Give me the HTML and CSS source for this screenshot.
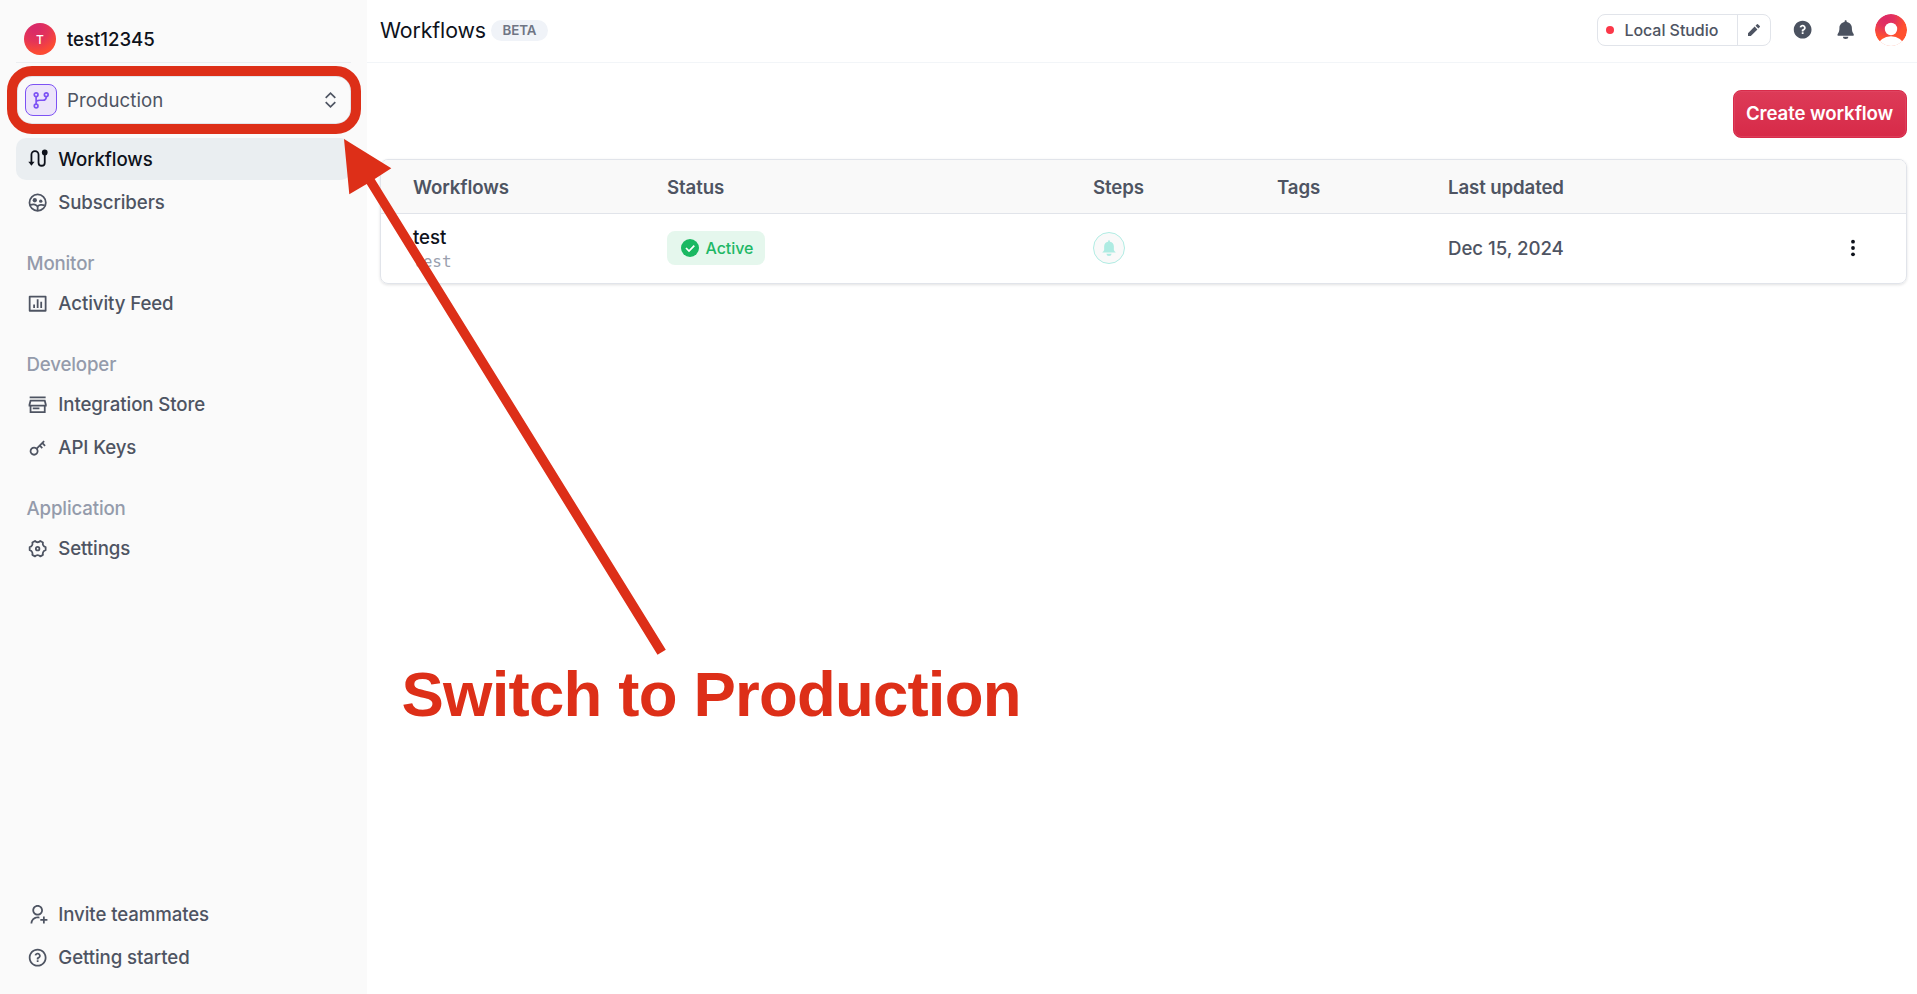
FILE: index.html
```html
<!DOCTYPE html>
<html lang="en">
<head>
<meta charset="utf-8">
<title>Workflows</title>
<link rel="stylesheet" href="styles.css">
</head>
<body>
<div class="app">
  <aside class="sidebar">
    <div class="org"><span class="org-avatar">T</span><span class="org-name">test12345</span></div>
    <div class="env">
      <span class="env-icon"><svg viewBox="0 0 24 24" fill="none" stroke="currentColor" stroke-width="2.2"><circle cx="5.500" cy="5" r="2.500"/><circle cx="5.500" cy="20" r="2.500"/><circle cx="19" cy="5" r="2.500"/><path d="M5.500 7.500v10M19 7.500c0 3.500-1.500 4.800-4.500 4.800H10c-2.800 0-4.500.7-4.500 3"/></svg></span>
      <span class="env-name">Production</span>
      <svg class="env-caret" viewBox="0 0 24 24" fill="none" stroke="currentColor" stroke-width="2.2"><path d="M5.6 9.2 12 2.8l6.400 6.400M5.600 14.800 12 21.200l6.400-6.400"/></svg>
    </div>
    <nav class="nav">
      <a class="item active"><svg viewBox="0 0 24 24" fill="none" stroke="currentColor" stroke-width="2"><path d="M5 17V7.500a4 4 0 0 1 8 0v9a3.500 3.500 0 0 0 7 0V6"/><path d="M1.500 15.500h7L5 20z" fill="currentColor" stroke="none"/><circle cx="20" cy="5" r="3.200" fill="currentColor" stroke="none"/></svg>Workflows</a>
      <a class="item"><svg viewBox="0 0 24 24" fill="none" stroke="currentColor" stroke-width="2"><circle cx="12" cy="12" r="9.200"/><circle cx="8.800" cy="9.300" r="2.400" fill="currentColor" stroke="none"/><circle cx="15.500" cy="10.300" r="1.900" fill="currentColor" stroke="none"/><path d="M3.500 14.800c3.500-1.600 8-1 8.500 2.200v4M12.300 16c1.200-1.700 5-2 7.700-.8"/></svg>Subscribers</a>
      <h2 class="label">Monitor</h2>
      <a class="item"><svg viewBox="0 0 24 24" fill="currentColor"><path d="M3 3H21C21.5523 3 22 3.44772 22 4V20C22 20.5523 21.5523 21 21 21H3C2.44772 21 2 20.5523 2 20V4C2 3.44772 2.44772 3 3 3ZM4 5V19H20V5H4ZM7 13H9V17H7V13ZM11 7H13V17H11V7ZM15 10H17V17H15V10Z"/></svg>Activity Feed</a>
      <h2 class="label">Developer</h2>
      <a class="item"><svg viewBox="0 0 24 24" fill="none" stroke="currentColor" stroke-width="2"><path d="M3 3.700h18M4 7.500h16l1.200 4.500v1H2.800v-1zM4 13v7.500h16V13M6.500 16.200h7.500"/></svg>Integration Store</a>
      <a class="item"><svg viewBox="0 0 24 24" fill="currentColor"><path d="M10.7577 11.8281L18.6066 3.97919L20.0208 5.3934L18.6066 6.80761L21.0815 9.28249L19.6673 10.6967L17.1924 8.22183L15.7782 9.63604L17.8995 11.7574L16.4853 13.1716L14.364 11.0503L12.1719 13.2423C13.4581 15.1837 13.246 17.8251 11.5355 19.5355C9.58291 21.4882 6.41709 21.4882 4.46447 19.5355C2.51184 17.5829 2.51184 14.4171 4.46447 12.4645C6.17493 10.754 8.81633 10.5419 10.7577 11.8281ZM10.1213 18.1213C11.2929 16.9497 11.2929 15.0503 10.1213 13.8787C8.94975 12.7071 7.05025 12.7071 5.87868 13.8787C4.70711 15.0503 4.70711 16.9497 5.87868 18.1213C7.05025 19.2929 8.94975 19.2929 10.1213 18.1213Z"/></svg>API Keys</a>
      <h2 class="label">Application</h2>
      <a class="item"><svg viewBox="0 0 24 24" fill="none" stroke="currentColor" stroke-width="2" stroke-linejoin="round"><path d="M9 3.300C9.800 4.300 10.800 4.800 12 4.800s2.200-.5 3-1.500l3 1.700c-.4 1.200-.3 2.300.3 3.300.6 1.100 1.500 1.700 2.700 1.900v3.600c-1.200.2-2.100.8-2.700 1.900-.6 1-.7 2.100-.3 3.300l-3 1.700c-.8-1-1.800-1.500-3-1.500s-2.200.5-3 1.500L6 19c.4-1.200.3-2.300-.3-3.300-.6-1.100-1.500-1.700-2.700-1.900v-3.600c1.200-.2 2.100-.8 2.700-1.900.6-1 .7-2.100.3-3.300z"/><circle cx="12" cy="12" r="2"/></svg>Settings</a>
    </nav>
    <nav class="nav foot">
      <a class="item"><svg viewBox="0 0 24 24" fill="currentColor"><path d="M14 14.252V16.3414C13.3744 16.1203 12.7013 16 12 16C8.68629 16 6 18.6863 6 22H4C4 17.5817 7.58172 14 12 14C12.6906 14 13.3608 14.0875 14 14.252ZM12 13C8.685 13 6 10.315 6 7C6 3.685 8.685 1 12 1C15.315 1 18 3.685 18 7C18 10.315 15.315 13 12 13ZM12 11C14.21 11 16 9.21 16 7C16 4.79 14.21 3 12 3C9.79 3 8 4.79 8 7C8 9.21 9.79 11 12 11ZM18 17V14H20V17H23V19H20V22H18V19H15V17H18Z"/></svg>Invite teammates</a>
      <a class="item"><svg viewBox="0 0 24 24" fill="currentColor"><path d="M12 22C6.47715 22 2 17.5228 2 12C2 6.47715 6.47715 2 12 2C17.5228 2 22 6.47715 22 12C22 17.5228 17.5228 22 12 22ZM12 20C16.4183 20 20 16.4183 20 12C20 7.58172 16.4183 4 12 4C7.58172 4 4 7.58172 4 12C4 16.4183 7.58172 20 12 20ZM11 15H13V17H11V15ZM13 13.3551V14H11V12.5C11 11.9477 11.4477 11.5 12 11.5C12.8284 11.5 13.5 10.8284 13.5 10C13.5 9.17157 12.8284 8.5 12 8.5C11.2723 8.5 10.6656 9.01823 10.5288 9.70577L8.56731 9.31346C8.88637 7.70919 10.302 6.5 12 6.5C13.933 6.5 15.5 8.067 15.5 10C15.5 11.5855 14.4457 12.9248 13 13.3551Z"/></svg>Getting started</a>
    </nav>
  </aside>
  <main class="main">
    <header class="topbar">
      <h1 class="title">Workflows</h1><span class="beta">BETA</span>
      <div class="studio"><span class="studio-name"><i class="dot"></i>Local Studio</span><span class="studio-edit"><svg viewBox="0 0 24 24" fill="currentColor"><path d="M12.900 6.858l4.242 4.243L7.242 21H3v-4.243l9.900-9.900zm1.414-1.414l2.121-2.122a1 1 0 0 1 1.414 0l2.829 2.829a1 1 0 0 1 0 1.414l-2.122 2.121-4.242-4.242z"/></svg></span></div>
      <svg class="top-icon help" viewBox="0 0 24 24" fill="currentColor"><path d="M12 22C6.47715 22 2 17.5228 2 12C2 6.47715 6.47715 2 12 2C17.5228 2 22 6.47715 22 12C22 17.5228 17.5228 22 12 22ZM11 15V17H13V15H11ZM13 13.3551C14.4457 12.9248 15.5 11.5855 15.5 10C15.5 8.067 13.933 6.5 12 6.5C10.302 6.5 8.88637 7.70919 8.56731 9.31346L10.5288 9.70577C10.6656 9.01823 11.2723 8.5 12 8.5C12.8284 8.5 13.5 9.17157 13.5 10C13.5 10.8284 12.8284 11.5 12 11.5C11.4477 11.5 11 11.9477 11 12.5V14H13V13.3551Z"/></svg>
      <svg class="top-icon bell" viewBox="0 0 24 24" fill="currentColor"><path d="M12 1.500c.7 0 1.200.5 1.200 1.200v.6c3.400.6 5.800 3.300 5.800 6.700 0 3 .5 5 1.800 6.600.8 1 .4 2.400-.8 2.400H4c-1.200 0-1.600-1.400-.8-2.400C4.500 15 5 13 5 10c0-3.400 2.400-6.100 5.800-6.700v-.6c0-.7.5-1.200 1.200-1.200zM9 20h6a3 2.500 0 0 1-6 0z"/></svg>
      <svg class="user" viewBox="0 0 32 32"><defs><radialGradient id="ug" cx=".35" cy=".15" r=".8"><stop offset="0" stop-color="#dd2a66"/><stop offset=".3" stop-color="#e23160"/><stop offset=".75" stop-color="#ff512f"/></radialGradient><clipPath id="uc"><circle cx="16" cy="16" r="16"/></clipPath></defs><g clip-path="url(#uc)"><circle cx="16" cy="16" r="16" fill="url(#ug)"/><circle cx="16" cy="15" r="6.200" fill="#fff"/><ellipse cx="16" cy="31.500" rx="12.500" ry="9.200" fill="#fff"/></g></svg>
    </header>
    <section class="content">
      <button class="create">Create workflow</button>
      <div class="table">
        <div class="row head"><span>Workflows</span><span>Status</span><span>Steps</span><span>Tags</span><span>Last updated</span><span></span></div>
        <div class="row body">
          <span class="wf"><b class="wf-name">test</b><code class="wf-id">test</code></span>
          <span><span class="chip"><svg viewBox="0 0 20 20"><circle cx="10" cy="10" r="9" fill="#1bb862"/><path d="m6 10 3 3 5.300-5.400" fill="none" stroke="#fff" stroke-width="1.700"/></svg>Active</span></span>
          <span><span class="step"><svg viewBox="0 0 24 24" fill="currentColor"><path d="M12 1.500c.8 0 1.200.5 1.200 1.200v.8c3.300.5 5.300 3 5.300 6.500v4.500c0 1 1.500 2 2.500 3.500H3c1-1.500 2.500-2.500 2.500-3.500V10c0-3.500 2-6 5.300-6.500v-.8c0-.7.4-1.200 1.200-1.200zM8.500 19.800h7a3.500 2.700 0 0 1-7 0z"/></svg></span></span>
          <span></span><span>Dec 15, 2024</span>
          <span><svg class="more" viewBox="0 0 6 20" fill="#0e121b"><circle cx="3" cy="3.700" r="1.900"/><circle cx="3" cy="10" r="1.900"/><circle cx="3" cy="16.300" r="1.900"/></svg></span>
        </div>
      </div>
    </section>
  </main>
</div>
<svg class="callout" viewBox="0 0 1917 994" fill="#dd2f18">
  <rect x="12" y="71" width="344" height="58" rx="20" fill="none" stroke="#dd2f18" stroke-width="10"/>
  <path d="M344 139 391.300 168.300 374.700 179 665.800 649.700 657.500 654.700 366.700 184 349.300 194.300z"/>
  <text class="callout-text" x="401.500" y="716" textLength="620">Switch to Production</text>
</svg>
</body>
</html>
```

FILE: styles.css
```css
* { box-sizing: border-box; }
body { margin: 0; background: #fff; font-family: Inter, "Liberation Sans", sans-serif; font-size: 18.67px; letter-spacing: -0.1px; color: #4e5462; }
h1, h2 { margin: 0; font-size: inherit; font-weight: inherit; }
svg { display: block; flex: none; }
.app { display: flex; height: 994px; overflow: hidden; }

.sidebar { width: 367px; flex: none; background: #fafafa; padding: 0 16px 15px; display: flex; flex-direction: column; }
.org { height: 63px; padding: 16px 8px 0; border-bottom: 1px solid #ebedf0; display: flex; align-items: center; gap: 11px; color: #0e121b; font-weight: 500; letter-spacing: -0.05px; }
.org-avatar { width: 32px; height: 32px; border-radius: 50%; display: grid; place-items: center; color: #fff; font-size: 12px; background: radial-gradient(circle at 35% 15%, #d92a68 10%, #e43458 40%, #fd4c31 75%, #f04050); }
.env { margin: 13px 0 14px 1px; height: 48px; border: 1px solid #e1e4ea; border-radius: 14px; display: flex; align-items: center; padding: 0 9px 0 7px; }
.env-icon { width: 32px; height: 32px; border: 1px solid #7d52f4; border-radius: 8px; background: #ece4fa; color: #7d52f4; display: grid; place-items: center; }
.env-icon svg { width: 18px; height: 18px; }
.env-name { margin-left: 10px; flex: 1; font-weight: 400; letter-spacing: 0.05px; }
.env-caret { width: 21px; height: 18px; }
.nav { display: flex; flex-direction: column; }
.item { height: 43px; padding: 0 11px; border-radius: 10px; display: flex; align-items: center; gap: 10px; font-weight: 500; }
.item svg { width: 21.3px; height: 21.3px; }
.active { background: #eaeef1; color: #0e121b; height: 42px; margin-bottom: 1px; }
.label { height: 36px; margin-top: 22px; padding-left: 10.5px; line-height: 36px; color: #949bab; font-weight: 500; letter-spacing: -0.15px; }
.foot { margin-top: auto; }

.main { flex: 1; display: flex; flex-direction: column; }
.topbar { height: 63px; padding: 0 10px 2px 13px; border-bottom: 1px solid #f2f5f8; display: flex; align-items: center; }
.title { font-size: 21.33px; color: #0e121b; letter-spacing: -0.12px; }
.beta { margin-left: 5px; width: 57px; height: 21px; border-radius: 11px; background: #f0f3f8; font-size: 13.33px; line-height: 21px; font-weight: 600; color: #6f7584; letter-spacing: -0.1px; text-align: center; }
.studio { margin-left: auto; height: 32px; display: flex; border: 1px solid #e1e4ea; border-radius: 8px; font-size: 16px; font-weight: 500; }
.studio-name { width: 140px; padding-left: 8px; display: flex; align-items: center; border-right: 1px solid #e1e4ea; letter-spacing: -0.05px; }
.dot { width: 8px; height: 8px; border-radius: 50%; background: #fb3748; margin-right: 10px; }
.studio-edit { width: 32px; display: grid; place-items: center; }
.studio-edit svg { width: 16px; height: 16px; }
.top-icon { width: 21.3px; height: 21.3px; color: #4b5260; }
.help { margin-left: 21px; }
.bell { margin-left: 21px; }
.user { margin-left: 19px; width: 32px; height: 32px; }

.content { padding: 27px 10px 0 13px; display: flex; flex-direction: column; align-items: flex-end; }
.create { width: 174px; height: 48px; border: 1px solid #d82b4a; border-radius: 8px; padding: 0 1px 2px 0; background: linear-gradient(#dd3b58, #d72a48); box-shadow: inset 0 0 0 1px #e14e6980; color: #fff; font: 600 18.67px Inter, sans-serif; letter-spacing: -0.1px; white-space: nowrap; }
.table { margin-top: 21px; width: 100%; height: 125px; border: 1px solid #e1e4ea; border-radius: 8px; overflow: hidden; box-shadow: 0 1px 3px #0e121b1f; font-weight: 500; letter-spacing: -0.05px; }
.row { display: grid; grid-template-columns: 254px 426px 184px 171px 398px 1fr; padding-left: 32px; align-items: center; }
.head { height: 54px; padding-top: 2px; background: #f9f9f9; border-bottom: 1px solid #e1e4ea; font-weight: 600; letter-spacing: -0.12px; }
.body { height: 69px; }
.wf { display: flex; flex-direction: column; }
.wf-name { color: #0e121b; font-weight: 500; line-height: 26px; }
.wf-id { font: 16px/21px "DejaVu Sans Mono", monospace; color: #99a0ae; letter-spacing: 0; }
.chip { display: flex; width: 98px; height: 34px; align-items: center; gap: 6px; padding-left: 12.5px; border-radius: 8px; background: #e5f7ed; color: #1fb866; font-size: 16px; margin-bottom: 1px; }
.chip svg { width: 20px; height: 20px; }
.step { width: 32px; height: 32px; margin-bottom: 1px; border: 1px solid #b0ece3; border-radius: 50%; background: #f9f9f9; color: #aeebe2; display: grid; place-items: center; }
.step svg { width: 18px; height: 18px; }
.more { width: 6px; height: 20px; margin: 0 0 1px 4px; }

.callout { position: absolute; left: 0; top: 0; width: 1917px; height: 994px; pointer-events: none; }
.callout-text { font: bold 63.500px "Liberation Sans", sans-serif; letter-spacing: 0; }
```
